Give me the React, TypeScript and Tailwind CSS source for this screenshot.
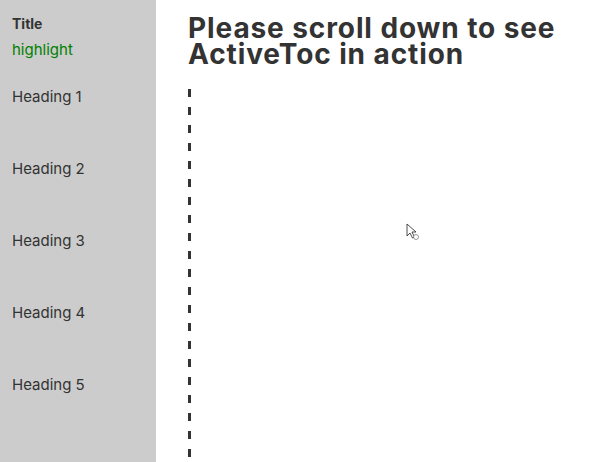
import React from "react";

export default function App() {
  const headings = ["Heading 1", "Heading 2", "Heading 3", "Heading 4", "Heading 5"];
  return (
    <div
      className="relative flex h-[462px] w-[595px] overflow-hidden bg-white text-[#333333]"
      style={{ fontFamily: "Inter, 'Noto Sans', sans-serif" }}
    >
      <aside className="flex h-full w-[156px] shrink-0 flex-col bg-[#cccccc] px-3 pt-[15px]">
        <div className="text-[14px] font-bold leading-[18px]">Title</div>
        <div className="mt-[8px] text-[15px] leading-[18px] text-[#008000]">highlight</div>
        <div className="mt-[29px] flex flex-col gap-[54px]">
          {headings.map((h) => (
            <div key={h} className="text-[15px] leading-[18px] text-[#333333]">
              {h}
            </div>
          ))}
        </div>
      </aside>
      <main className="flex flex-1 flex-col pl-[32px] pt-[15px]">
        <h1 className="text-[28px] font-bold leading-[26px] tracking-[0.9px] text-[#333333]">
          Please scroll down to see
          <br />
          ActiveToc in action
        </h1>
        <div className="mt-[22px] h-[373px] w-[3px] bg-[repeating-linear-gradient(to_bottom,#333333_0px,#333333_8px,transparent_8px,transparent_18px)]" />
      </main>
      <svg
        className="absolute left-[406px] top-[223px]"
        width="14"
        height="18"
        viewBox="0 0 14 18"
      >
        <path d="M1 1 L1 13 L4 10 L6.5 15 L8.5 14 L6 9 L10 9 Z" fill="#ffffff" stroke="#222222" strokeWidth="0.8" strokeLinejoin="round" />
        <circle cx="10" cy="14" r="2.5" fill="#ffffff" stroke="#555555" strokeWidth="0.6" />
      </svg>
    </div>
  );
}
